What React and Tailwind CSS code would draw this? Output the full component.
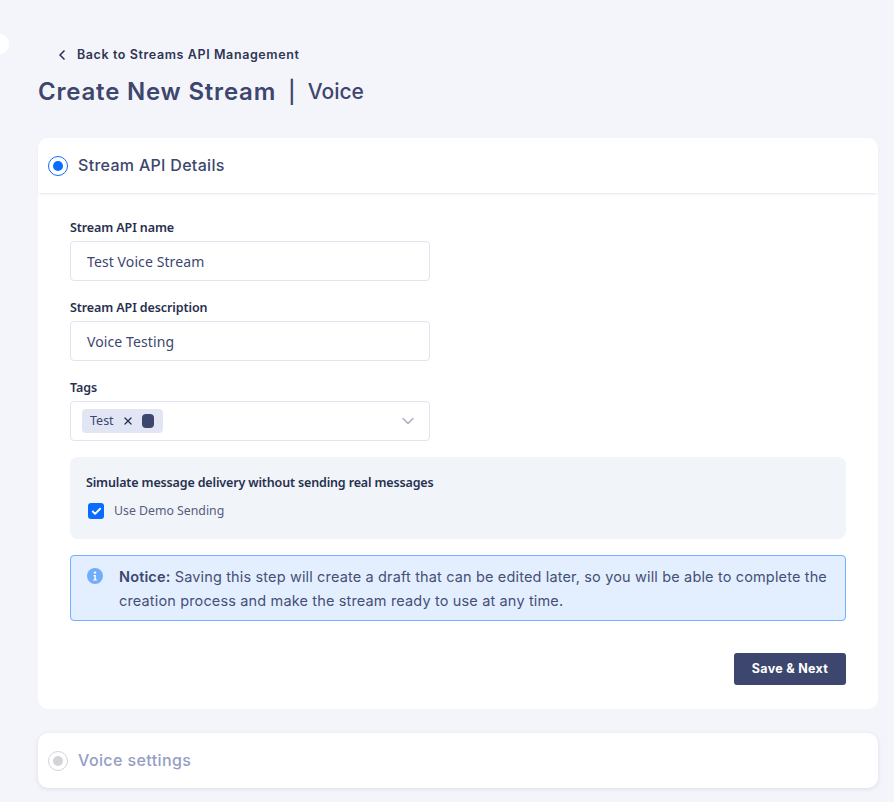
import { ChevronLeft, ChevronDown, X, Check } from "lucide-react";

const POP = "font-['Inter',sans-serif]";
const PLEX = "font-['Noto_Sans',sans-serif]";

function Field({ label, value }) {
  return (
    <div className="mb-[17px]">
      <label className={`${PLEX} block h-[23px] text-[12.5px] leading-[20px] font-semibold tracking-[-0.1px] text-[#27304f]`}>{label}</label>
      <div className={`${PLEX} flex h-[40px] w-[360px] items-center rounded-[4px] border border-[#e1e4ee] px-4 text-[14px] tracking-[0.1px] text-[#3d466e]`}>
        {value}
      </div>
    </div>
  );
}

export default function App() {
  return (
    <div className="relative h-[802px] overflow-hidden bg-[#f4f5fa] pl-[38px] pr-[16px]">
      <div className="absolute -left-[9px] top-[34px] h-[20px] w-[18px] rounded-full bg-white" />

      <div className={`${POP} box-content flex h-[20px] items-center pl-[16px] pt-[45px] text-[12.5px] font-semibold tracking-[0.6px] text-[#2f3654]`}>
        <ChevronLeft size={16} strokeWidth={2.5} className="mr-[7px] text-[#2f3654]" />
        Back to Streams API Management
      </div>
      <div className={`${POP} mt-[11px] flex h-[32px] items-center font-semibold text-[#3d466e]`}>
        <span className="text-[24px] tracking-[0.8px]">Create New Stream</span>
        <span className="mx-[12px] text-[22px] font-medium">|</span>
        <span className="text-[21px] font-medium">Voice</span>
      </div>

      <div className="mt-[30px] rounded-[10px] bg-white">
        <div className="flex h-[55px] items-center rounded-t-[10px] pl-[10px] shadow-[0_2px_3px_-1px_rgba(40,50,90,0.12)]">
          <span className="flex h-[20px] w-[20px] items-center justify-center rounded-full border border-[#0a6cff]">
            <span className="h-[10px] w-[10px] rounded-full bg-[#0a6cff]" />
          </span>
          <span className={`${POP} ml-[10px] pb-[2px] text-[16px] font-medium tracking-[0.3px] text-[#3d466e]`}>Stream API Details</span>
        </div>

        <div className="px-[32px] pt-[25px] pb-[24px]">
          <Field label="Stream API name" value="Test Voice Stream" />
          <Field label="Stream API description" value="Voice Testing" />

          <label className={`${PLEX} block h-[23px] text-[12.5px] leading-[20px] font-semibold tracking-[-0.1px] text-[#27304f]`}>Tags</label>
          <div className="flex h-[40px] w-[360px] items-center rounded-[4px] border border-[#e1e4ee] pl-[11px] pr-[11px]">
            <div className={`${PLEX} flex h-[24px] w-[81px] items-center rounded-[4px] bg-[#e2e6f4] pl-[8px] text-[12.5px] text-[#3d466e]`}>
              Test
              <X size={12} strokeWidth={2.5} className="ml-[8px] text-[#27304f]" />
              <span className="ml-[8px] h-[14px] w-[12px] rounded-[4px] bg-[#3d466e]" />
            </div>
            <ChevronDown size={20} strokeWidth={1.5} className="ml-auto text-[#a4a9bd]" />
          </div>

          <div className="mt-[16px] h-[82px] rounded-[8px] bg-[#f1f4f8] pl-[16px] pt-[16px]">
            <div className={`${PLEX} text-[12.5px] leading-[20px] font-semibold tracking-[-0.15px] text-[#27304f]`}>
              Simulate message delivery without sending real messages
            </div>
            <div className="mt-[9px] flex items-center pl-[2px]">
              <span className="flex h-[16px] w-[16px] items-center justify-center rounded-[3px] bg-[#0a6cff]">
                <Check size={11} strokeWidth={4} className="text-white" />
              </span>
              <span className={`${PLEX} ml-[10px] text-[12.3px] text-[#555d80]`}>Use Demo Sending</span>
            </div>
          </div>

          <div className="mt-[16px] flex h-[66px] rounded-[4px] border border-[#73b0ff] bg-[#e3effe] pl-[16px] pr-[12px] pt-[9px]">
            <svg viewBox="0 0 16 16" className="mt-[3px] h-[16px] w-[16px] shrink-0">
              <circle cx="8" cy="8" r="8" fill="#72adfb" />
              <circle cx="8" cy="4.6" r="1.2" fill="#fff" />
              <path d="M6.6 7h2.2v4.2h1v1.2H6.4v-1.2h1V8.2h-.8z" fill="#fff" />
            </svg>
            <p className={`${POP} ml-[16px] text-[14.5px] leading-[24px] tracking-[0.15px] text-[#464f77]`}>
              <span className="font-semibold text-[#3d466e]">Notice:</span> Saving this step will create a draft that can be edited later, so you will be able to complete the creation process and make the stream ready to use at any time.
            </p>
          </div>

          <div className="mt-[32px] flex justify-end">
            <button className={`${POP} h-[32px] w-[112px] rounded-[3px] bg-[#3d466e] text-[12.5px] font-bold tracking-[0.3px] text-white`}>
              Save &amp; Next
            </button>
          </div>
        </div>
      </div>

      <div className="mt-[24px] flex h-[55px] items-center rounded-[10px] bg-white pl-[10px] shadow-[0_1px_4px_rgba(40,50,90,0.12)]">
        <span className="flex h-[20px] w-[20px] items-center justify-center rounded-full border border-[#d3d4da]">
          <span className="h-[10px] w-[10px] rounded-full bg-[#d3d4da]" />
        </span>
        <span className={`${POP} ml-[10px] pb-[2px] text-[16px] font-medium tracking-[0.4px] text-[#969dc6]`}>Voice settings</span>
      </div>
    </div>
  );
}
